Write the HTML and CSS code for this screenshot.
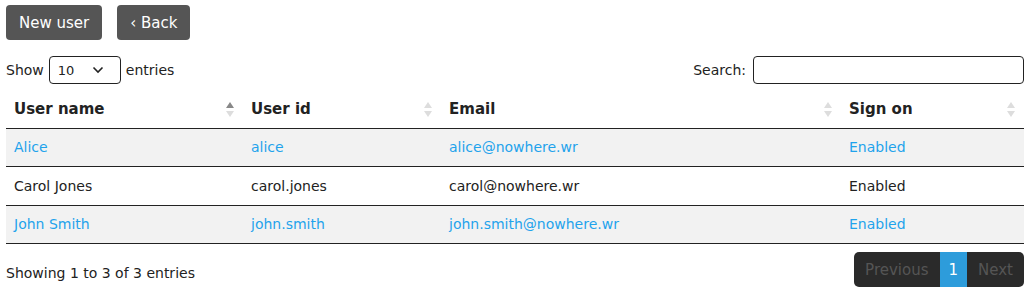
FILE: index.html
```html
<!DOCTYPE html>
<html lang="en">

<head>
    <meta charset="UTF-8">
    <title>Users</title>
    <link rel="stylesheet" href="styles.css">
</head>

<body>
    <div class="actions">
        <button class="btn">New user</button>
        <button class="btn">&lsaquo; Back</button>
    </div>

    <div class="table-top">
        <label class="length">Show
            <span class="select">10
                <svg width="12" height="8" viewBox="0 0 12 8"><path d="M1.5 1.5 L6 6 L10.5 1.5" fill="none" stroke="#222" stroke-width="1.6"/></svg>
            </span>
            entries</label>
        <label class="search">Search: <input type="text"></label>
    </div>

    <table class="users">
        <thead>
            <tr>
                <th class="c1">User name<span class="sort asc"></span></th>
                <th class="c2">User id<span class="sort"></span></th>
                <th class="c3">Email<span class="sort"></span></th>
                <th class="c4">Sign on<span class="sort"></span></th>
            </tr>
        </thead>
        <tbody>
            <tr class="odd link">
                <td>Alice</td>
                <td>alice</td>
                <td>alice@nowhere.wr</td>
                <td>Enabled</td>
            </tr>
            <tr>
                <td>Carol Jones</td>
                <td>carol.jones</td>
                <td>carol@nowhere.wr</td>
                <td>Enabled</td>
            </tr>
            <tr class="odd link">
                <td>John Smith</td>
                <td>john.smith</td>
                <td>john.smith@nowhere.wr</td>
                <td>Enabled</td>
            </tr>
        </tbody>
    </table>

    <div class="table-bottom">
        <div class="info">Showing 1 to 3 of 3 entries</div>
        <div class="paging">
            <span class="page disabled">Previous</span>
            <span class="page current">1</span>
            <span class="page disabled">Next</span>
        </div>
    </div>
</body>

</html>
```

FILE: styles.css
```css
* {
    box-sizing: border-box;
    margin: 0;
    padding: 0;
}

body {
    font-family: "DejaVu Sans", sans-serif;
    font-size: 14px;
    color: #222;
    background: #fff;
    padding: 5px 6px;
}

/* Top buttons */
.actions {
    display: flex;
    gap: 15px;
}

.btn {
    background-color: #555;
    color: #fff;
    border: none;
    border-radius: 4px;
    font-family: inherit;
    font-size: 15px;
    height: 35px;
    padding: 0 13px;
}

/* Length + search */
.table-top {
    display: flex;
    justify-content: space-between;
    align-items: center;
    margin-top: 16px;
    height: 28px;
}

.length {
    display: flex;
    align-items: center;
    gap: 5px;
}

.select {
    display: inline-flex;
    align-items: center;
    justify-content: space-between;
    width: 72px;
    height: 28px;
    border: 1px solid #222;
    border-radius: 4px;
    padding: 0 16px 0 8px;
    font-size: 13px;
}

.search {
    display: flex;
    align-items: center;
    gap: 7px;
}

.search input {
    width: 271px;
    height: 28px;
    border: 1px solid #222;
    border-radius: 4px;
}

/* Table */
.users {
    width: 100%;
    border-collapse: collapse;
    margin-top: 6px;
}

.users th,
.users td {
    text-align: left;
    padding: 0 8px;
}

.users th {
    position: relative;
    height: 38px;
    font-weight: bold;
    font-size: 15px;
    border-bottom: 1px solid #222;
}

.users .c1 { width: 237px; }
.users .c2 { width: 198px; }
.users .c3 { width: 400px; }

.users td {
    height: 38.6px;
    border-bottom: 1px solid #222;
}

.users tr.odd td {
    background-color: #f2f2f2;
}

.users tr.link td {
    color: #1fa3ec;
}

.sort {
    position: absolute;
    right: 9px;
    top: 12px;
    width: 8px;
    height: 15px;
}

.sort::before,
.sort::after {
    content: "";
    position: absolute;
    left: 0;
    border-left: 4px solid transparent;
    border-right: 4px solid transparent;
}

.sort::before {
    top: 0;
    border-bottom: 6px solid #ddd;
}

.sort::after {
    bottom: 0;
    border-top: 6px solid #ddd;
}

.sort.asc::before {
    border-bottom-color: #888;
}

/* Info + paging */
.table-bottom {
    display: flex;
    justify-content: space-between;
    align-items: center;
    margin-top: 8px;
}

.info {
    padding-top: 7px;
}

.paging {
    display: flex;
    background-color: #2a2a2a;
    border-radius: 5px;
    overflow: hidden;
    height: 35px;
}

.page {
    display: flex;
    align-items: center;
    padding: 0 11px;
    font-size: 15px;
}

.page.disabled {
    color: #555;
}

.page.current {
    background-color: #2d9cdb;
    color: #fff;
    padding: 0 9px;
}
```
